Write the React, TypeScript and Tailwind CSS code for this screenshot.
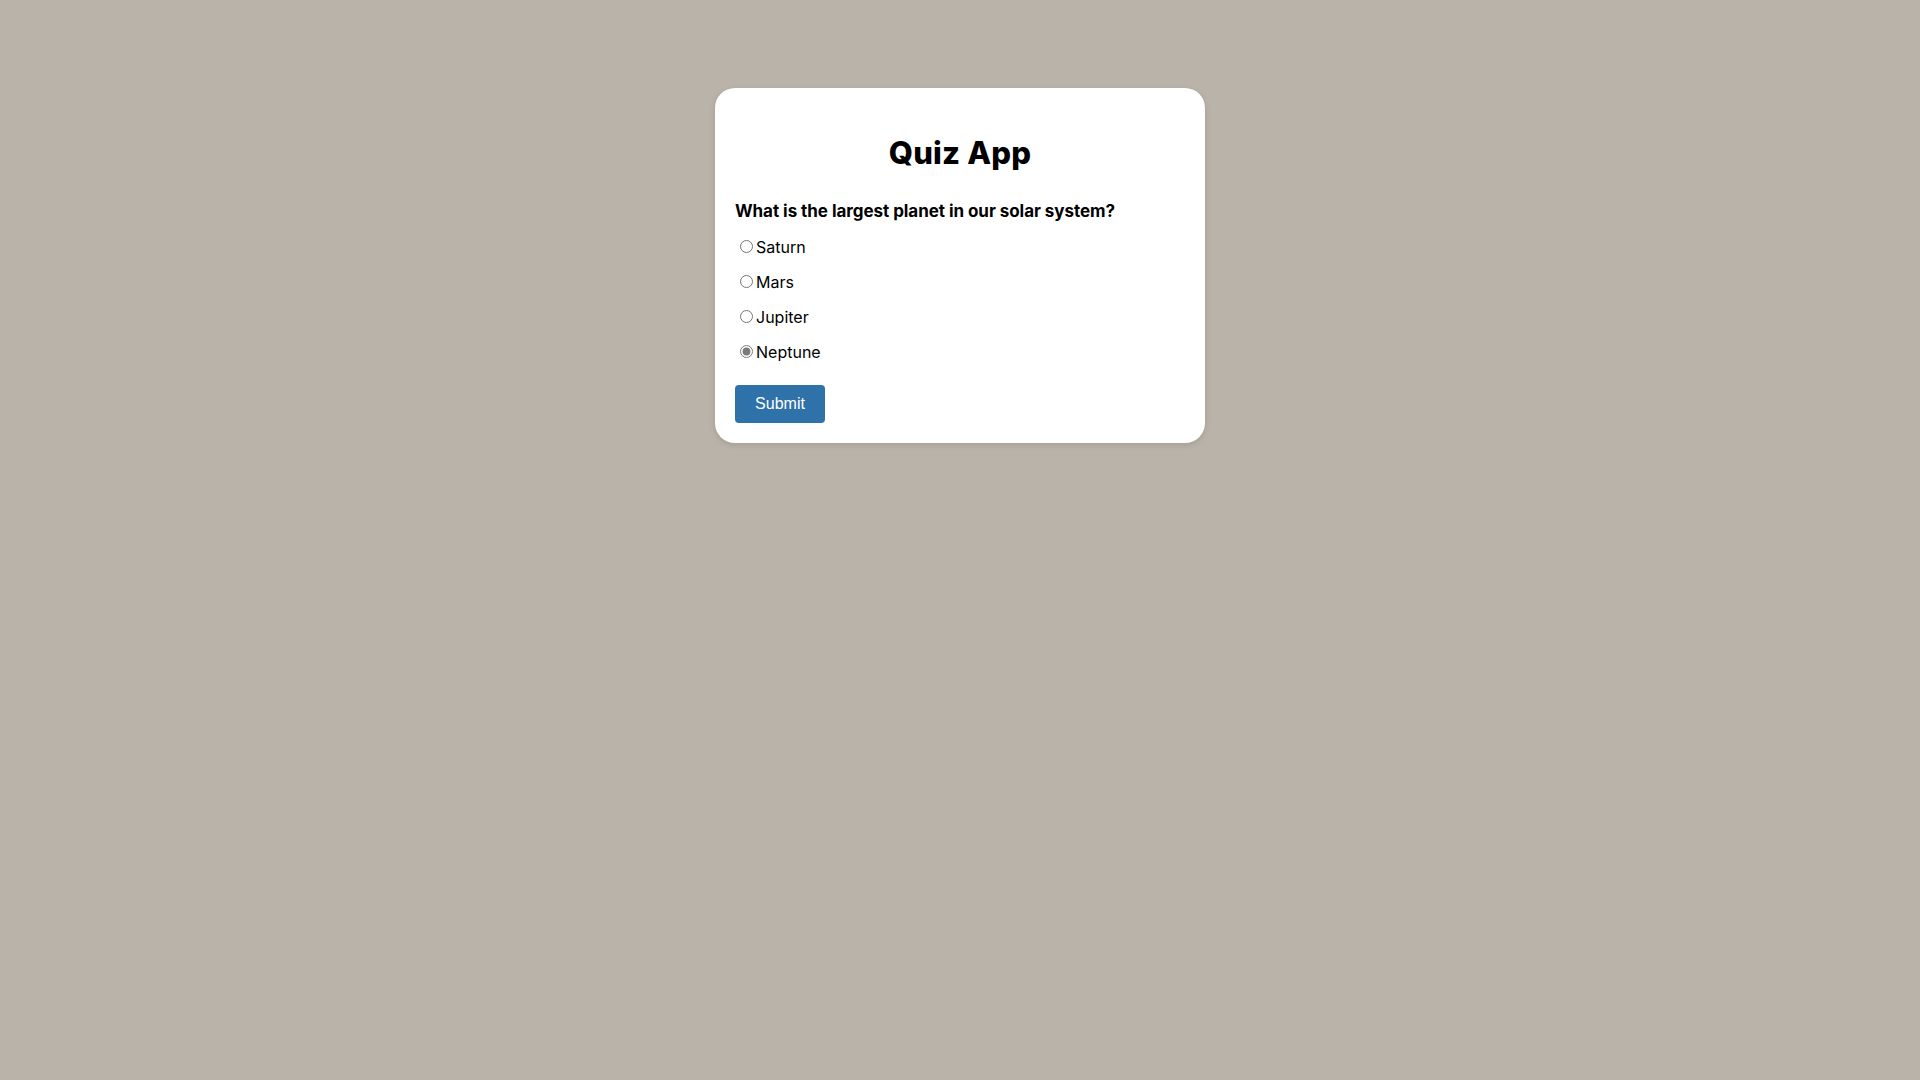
import React from "react";

export default function App() {
  const options = ["Saturn", "Mars", "Jupiter", "Neptune"];
  return (
    <div className="min-h-screen w-full bg-[#bab3a9] pt-[88px]" style={{ fontFamily: "Inter, 'Noto Sans', sans-serif" }}>
      <div className="mx-auto w-[490px] rounded-[20px] bg-white px-5 pt-[45px] pb-5 shadow-[0_2px_6px_rgba(0,0,0,0.12)]">
        <h1 className="text-center text-[31px] font-extrabold leading-[40px] tracking-[0.2px] text-black">Quiz App</h1>
        <p className="mt-[25px] text-[17px] font-bold leading-[26px] text-black tracking-[-0.05px]">
          What is the largest planet in our solar system?
        </p>
        <div className="mt-[5px] flex flex-col">
          {options.map((o) => (
            <label key={o} className="flex h-[35px] items-center text-[16px] text-black">
              <input
                type="radio"
                name="q"
                defaultChecked={o === "Neptune"}
                className="m-0 ml-[5px] mr-[3px] h-[13px] w-[13px] accent-[#7a7a7a]"
              />
              <span>{o}</span>
            </label>
          ))}
        </div>
        <button
          className="mt-[16px] h-[38px] w-[90px] rounded-[4px] bg-[#2f71a9] text-[16px] text-white"
          style={{ fontFamily: "'Liberation Sans', Arial, sans-serif" }}
        >
          Submit
        </button>
      </div>
    </div>
  );
}
